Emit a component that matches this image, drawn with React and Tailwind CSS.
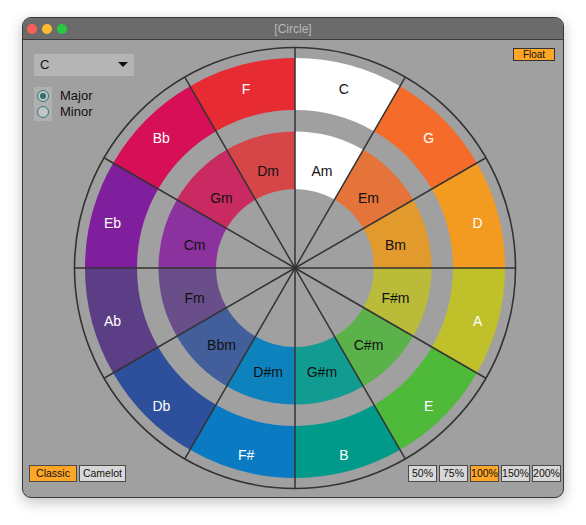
import React from "react";

const CX = 272;
const CY = 228;

const majors = [
  ["C", "#ffffff", "#111"],
  ["G", "#f56b29", "#fff"],
  ["D", "#f39b20", "#fff"],
  ["A", "#c0c02a", "#fff"],
  ["E", "#4fb93a", "#fff"],
  ["B", "#009a8b", "#fff"],
  ["F#", "#0a7bc2", "#fff"],
  ["Db", "#2e4f9b", "#fff"],
  ["Ab", "#5b3e86", "#fff"],
  ["Eb", "#801f9d", "#fff"],
  ["Bb", "#d60f57", "#fff"],
  ["F", "#e62b33", "#fff"],
];

const minors = [
  ["Am", "#ffffff"],
  ["Em", "#e5743a"],
  ["Bm", "#e29a2c"],
  ["F#m", "#b9bb39"],
  ["C#m", "#5bb14a"],
  ["G#m", "#129b90"],
  ["D#m", "#0d82bd"],
  ["Bbm", "#425e9b"],
  ["Fm", "#6a4e8a"],
  ["Cm", "#8c329e"],
  ["Gm", "#c92a62"],
  ["Dm", "#d64548"],
];

function pt(r, a) {
  const rad = (a * Math.PI) / 180;
  return [CX + r * Math.sin(rad), CY - r * Math.cos(rad)];
}

function sector(r0, r1, a0, a1) {
  const [x1, y1] = pt(r1, a0);
  const [x2, y2] = pt(r1, a1);
  const [x3, y3] = pt(r0, a1);
  const [x4, y4] = pt(r0, a0);
  return `M${x1} ${y1} A${r1} ${r1} 0 0 1 ${x2} ${y2} L${x3} ${y3} A${r0} ${r0} 0 0 0 ${x4} ${y4} Z`;
}

const FONT = "'Liberation Sans', Arial, sans-serif";

function Wheel() {
  return (
    <svg
      className="absolute inset-0"
      width="540"
      height="457"
      viewBox="0 0 540 457"
    >
      {majors.map(([name, fill], i) => (
        <path key={name} d={sector(158, 210, i * 30, i * 30 + 30)} fill={fill} />
      ))}
      {minors.map(([name, fill], i) => (
        <path key={name} d={sector(79, 136.5, i * 30, i * 30 + 30)} fill={fill} />
      ))}
      <circle cx={CX} cy={CY} r="220.5" fill="none" stroke="#333" strokeWidth="1.6" />
      {Array.from({ length: 12 }).map((_, i) => {
        const [x, y] = pt(220.5, i * 30);
        return (
          <line
            key={i}
            x1={CX}
            y1={CY}
            x2={x}
            y2={y}
            stroke="#333"
            strokeWidth="1.5"
          />
        );
      })}
      <circle cx={CX} cy={CY} r="2.5" fill="#333" />
      {majors.map(([name, , color], i) => {
        const [x, y] = pt(189, i * 30 + 15);
        return (
          <text
            key={name}
            x={x}
            y={y + 4}
            fill={color}
            fontSize="14"
            fontFamily={FONT}
            textAnchor="middle"
            dominantBaseline="central"
          >
            {name}
          </text>
        );
      })}
      {minors.map(([name], i) => {
        const [x, y] = pt(104, i * 30 + 15);
        return (
          <text
            key={name}
            x={x}
            y={y + 3.5}
            fill="#111"
            fontSize="14"
            fontFamily={FONT}
            textAnchor="middle"
            dominantBaseline="central"
          >
            {name}
          </text>
        );
      })}
    </svg>
  );
}

function Radio({ checked, label }) {
  return (
    <div className="flex items-center h-[16px]">
      <div className="w-[18px] shrink-0 flex justify-center">
        <div className="w-[12px] h-[12px] rounded-full border border-[#2f7775] bg-[#c4c4c4] flex items-center justify-center">
          {checked && <div className="w-[6px] h-[6px] rounded-full bg-[#2f6b6a]" />}
        </div>
      </div>
      <span className="ml-[8px] text-[13px] text-[#111] whitespace-nowrap">{label}</span>
    </div>
  );
}

function Btn({ children, active, w }) {
  return (
    <div
      className={`${w} h-[17px] border border-[#4a4a4a] flex items-center justify-center text-[10.5px] text-[#111] ${
        active ? "bg-[#ffa626]" : "bg-[#d8d8d8]"
      }`}
    >
      {children}
    </div>
  );
}

export default function App() {
  return (
    <div
      className="w-[586px] h-[525px] bg-white pt-[17px] pl-[22px]"
      style={{ fontFamily: FONT }}
    >
      <div className="w-[542px] h-[481px] rounded-[9px] border border-[#3a3a3a] bg-[#a0a0a0] overflow-hidden flex flex-col shadow-[0_4px_14px_rgba(0,0,0,0.25)]">
        <div className="relative h-[22px] bg-[#6b6b6b] border-b border-[#3c3c3c] flex items-center justify-center">
          <div className="absolute left-[4px] top-[6px] flex gap-[5px]">
            <div className="w-[10px] h-[10px] rounded-full bg-[#fe5f57]" />
            <div className="w-[10px] h-[10px] rounded-full bg-[#febc2e]" />
            <div className="w-[10px] h-[10px] rounded-full bg-[#28c840]" />
          </div>
          <span className="text-[12px] text-[#b9b9b9]">[Circle]</span>
        </div>
        <div className="relative flex-1">
          <Wheel />
          <div className="relative h-full flex flex-col">
            <div className="flex justify-between items-start">
              <div className="ml-[11px] mt-[14px]">
                <div className="w-[100px] h-[22px] bg-[#b5b5b5] flex items-center justify-between pl-[6px] pr-[6px]">
                  <span className="text-[13px] text-[#111]">C</span>
                  <svg width="10" height="6" viewBox="0 0 10 6">
                    <path d="M0 0 L10 0 L5 5 Z" fill="#111" />
                  </svg>
                </div>
                <div className="mt-[11px] w-[18px] h-[34px] bg-[#b0b0b0] py-[1px] flex flex-col">
                  <Radio checked label="Major" />
                  <Radio label="Minor" />
                </div>
              </div>
              <div className="mt-[8px] mr-[8px] w-[42px] h-[13px] bg-[#ffa626] border border-[#333] flex items-center justify-center text-[10px] text-[#111]">
                Float
              </div>
            </div>
            <div className="flex-1" />
            <div className="flex justify-between items-end mb-[15px]">
              <div className="flex gap-[2px] ml-[6px]">
                <Btn active w="w-[48px]">Classic</Btn>
                <Btn w="w-[47px]">Camelot</Btn>
              </div>
              <div className="flex gap-[2px] mr-[2px]">
                <Btn w="w-[29px]">50%</Btn>
                <Btn w="w-[29px]">75%</Btn>
                <Btn active w="w-[29px]">100%</Btn>
                <Btn w="w-[29px]">150%</Btn>
                <Btn w="w-[29px]">200%</Btn>
              </div>
            </div>
          </div>
        </div>
      </div>
    </div>
  );
}
